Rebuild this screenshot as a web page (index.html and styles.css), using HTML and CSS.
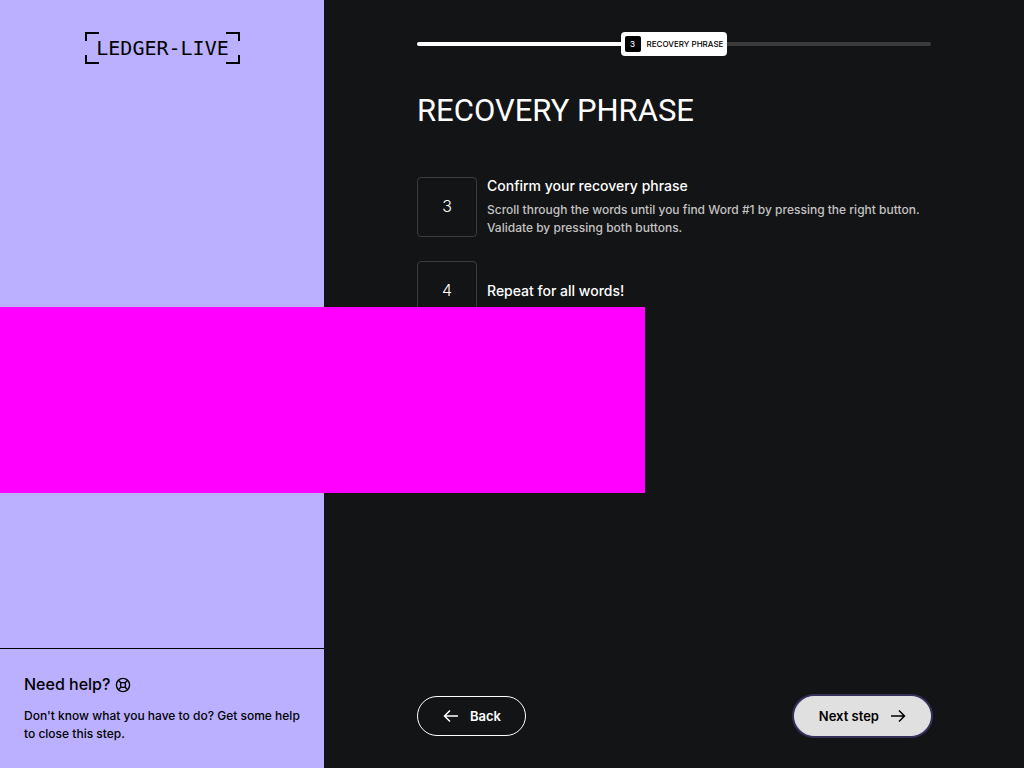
FILE: index.html
```html
<!DOCTYPE html>
<html lang="en">
<head>
<meta charset="utf-8">
<title>Ledger Live - Recovery phrase</title>
<link rel="stylesheet" href="styles.css">
</head>
<body>
<div class="app">
  <aside class="sidebar">
    <div class="logo">
      <svg class="bracket" width="14" height="32" viewBox="0 0 14 32" aria-hidden="true"><path d="M14 1H1v8M1 23v8h13"/></svg>
      <span class="logo-text">LEDGER-LIVE</span>
      <svg class="bracket" width="14" height="32" viewBox="0 0 14 32" aria-hidden="true"><path d="M0 1h13v8M13 23v8H0"/></svg>
    </div>
    <section class="help">
      <h2 class="help-title">Need help?
        <svg width="16" height="18" viewBox="0 0 16 18" aria-hidden="true"><circle cx="8" cy="10" r="6.6"/><rect x="5.6" y="7.6" width="4.8" height="4.8" rx="1.6"/><path d="M3.3 5.3l2.8 2.8M12.7 5.3L9.9 8.1M3.3 14.7l2.8-2.8M12.7 14.7L9.9 11.9"/></svg>
      </h2>
      <p class="help-text">Don't know what you have to do? Get some help to close this step.</p>
    </section>
  </aside>
  <main class="main">
    <div class="progress">
      <span class="track track-done"></span>
      <span class="step-tag"><span class="step-tag-number">3</span><span>RECOVERY PHRASE</span></span>
      <span class="track track-left"></span>
    </div>
    <h1 class="title">RECOVERY PHRASE</h1>
    <ol class="steps">
      <li class="step">
        <span class="step-number">3</span>
        <div class="step-body">
          <h3 class="step-title">Confirm your recovery phrase</h3>
          <p class="step-text">Scroll through the words until you find Word #1 by pressing the right button. Validate by pressing both buttons.</p>
        </div>
      </li>
      <li class="step">
        <span class="step-number">4</span>
        <div class="step-body"><h3 class="step-title">Repeat for all words!</h3></div>
      </li>
    </ol>
    <footer class="actions">
      <button class="button button-back" type="button">
        <svg width="16" height="16" viewBox="0 0 16 16" aria-hidden="true"><path d="M15 8H2M7 2.5L1.5 8 7 13.5"/></svg>
        Back
      </button>
      <button class="button button-next" type="button">
        Next step
        <svg width="16" height="16" viewBox="0 0 16 16" aria-hidden="true"><path d="M1 8h13M9 2.5L14.5 8 9 13.5"/></svg>
      </button>
    </footer>
  </main>
  <div class="cover"></div>
</div>
</body>
</html>
```

FILE: styles.css
```css
* { box-sizing: border-box; }
body, h1, h2, h3, p, ol { margin: 0; padding: 0; }
body {
  background: #131415;
  color: #fff;
  font-family: Inter, sans-serif;
  font-weight: 500;
}
svg { fill: none; stroke: currentColor; flex: none; }
.app { position: relative; display: flex; min-height: 100vh; }

.sidebar {
  flex: 0 0 324px;
  display: flex;
  flex-direction: column;
  justify-content: space-between;
  background: #bbb0ff;
  color: #000;
}
.logo {
  display: flex;
  justify-content: center;
  align-items: center;
  padding: 32px 0 0 1px;
}
.bracket { stroke-width: 2; }
.logo-text {
  margin: 0 -3px;
  font: 20px/32px "DejaVu Sans Mono", monospace;
}
.help { padding: 24px 24px 25px; border-top: 1px solid #000; }
.help-title {
  display: flex;
  align-items: center;
  gap: 5px;
  margin-bottom: 12px;
  font-size: 16px;
  font-weight: 500;
  line-height: 22px;
}
.help-title svg { stroke-width: 1.4; }
.help-text { font-size: 12px; line-height: 18px; }

.main {
  flex: 1;
  display: flex;
  flex-direction: column;
  padding: 32px 93px;
}
.progress { display: flex; align-items: center; }
.track { flex: 1; height: 4px; }
.track-done { background: #fff; border-radius: 2px 0 0 2px; }
.track-left { background: #3c3c3c; border-radius: 0 2px 2px 0; }
.step-tag {
  display: flex;
  align-items: center;
  gap: 6px;
  padding: 4px;
  border-radius: 4px;
  background: #fff;
  color: #000;
  font-size: 8px;
  line-height: 16px;
}
.step-tag-number {
  width: 16px;
  border-radius: 2px;
  background: #000;
  color: #fff;
  text-align: center;
}
.title {
  margin: 36px 0 48px;
  font-family: Roboto, sans-serif;
  font-size: 31px;
  font-weight: 400;
  line-height: 37px;
}
.steps { display: grid; gap: 24px; list-style: none; }
.step { display: flex; align-items: center; gap: 10px; }
.step-number {
  flex: 0 0 60px;
  height: 60px;
  border: 1px solid #3c3c3c;
  border-radius: 4px;
  font-size: 16px;
  font-weight: 300;
  line-height: 56px;
  text-align: center;
}
.step-title { font-size: 14px; font-weight: 500; line-height: 18px; }
.step-text { margin-top: 6px; color: #c3c3c3; font-size: 12px; line-height: 18px; }

.actions { display: flex; justify-content: space-between; margin-top: auto; }
.button {
  display: flex;
  align-items: center;
  gap: 11px;
  height: 40px;
  padding: 0 24px;
  border: 1px solid transparent;
  border-radius: 20px;
  font: 600 13px/16px Inter, sans-serif;
}
.button svg { stroke-width: 1.5; }
.button-back { padding-left: 25px; border-color: #fff; background: transparent; color: #fff; }
.button-next {
  border-color: #e0e0e0;
  background: #e0e0e0;
  color: #000;
  box-shadow: 0 0 0 2px #352f5b;
}

.cover {
  position: absolute;
  top: 307px;
  left: 0;
  width: 645px;
  height: 186px;
  background: #f0f;
}
```
